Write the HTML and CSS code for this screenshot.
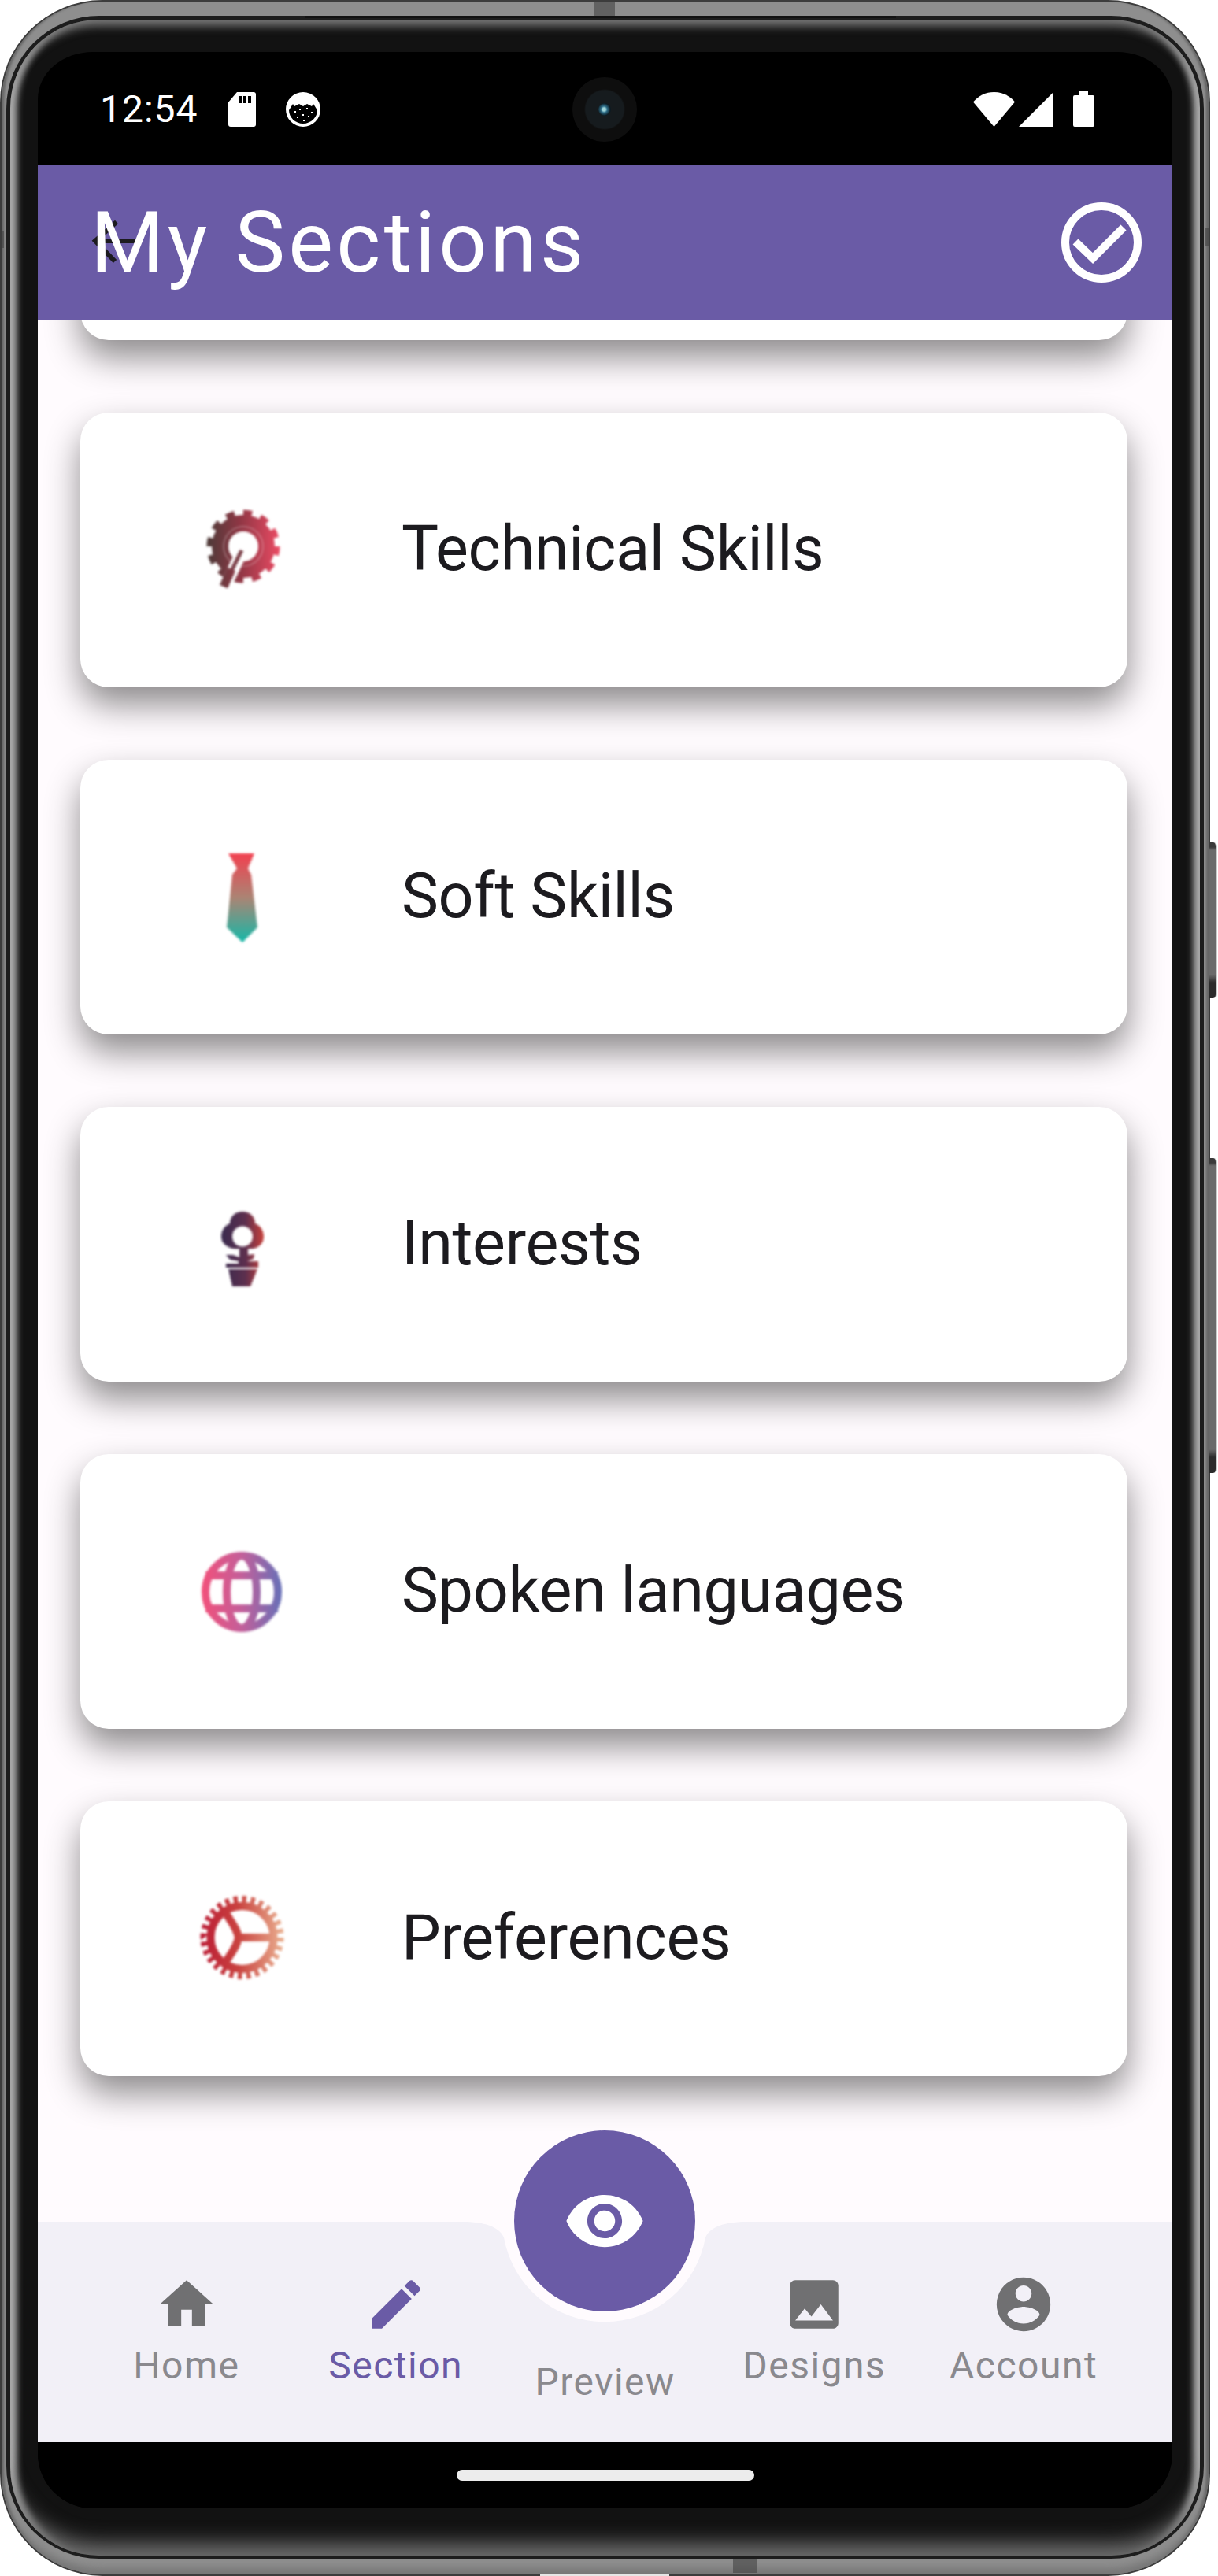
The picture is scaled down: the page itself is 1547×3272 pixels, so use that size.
FILE: index.html
```html
<!DOCTYPE html>
<html lang="en">
<head>
<meta charset="utf-8">
<title>My Sections</title>
<link rel="stylesheet" href="styles.css">
</head>
<body>
<div class="phone">
  <span class="side-btn side-btn-a"></span>
  <span class="side-btn side-btn-b"></span>
  <span class="seam seam-top"></span>
  <span class="seam seam-left"></span>
  <span class="seam seam-right"></span>
  <span class="seam seam-bottom"></span>
  <span class="foot-cut"></span>
  <div class="metal">
    <div class="groove">
      <span class="speaker"></span>
      <div class="bezel">
        <div class="screen">
          <div class="statusbar">
            <span class="clock">12:54</span>
            <svg class="sd" viewBox="0 0 35 44"><path fill="#fff" d="M11 0H32q3 0 3 3V41q0 3-3 3H3q-3 0-3-3V13Z"/><path fill="#000" d="M13 5h4v9h-4zM19 5h4v9h-4zM25 5h4v9h-4z"/></svg>
            <svg class="cat" viewBox="0 0 44 44"><circle cx="22" cy="22" r="22" fill="#fff"/><path fill="#000" d="M4 23 9 15 11 18 17 15 22 18 27 15 33 18 35 15 40 23C40 32 32 40 22 40S4 32 4 23Z"/><path fill="#fff" d="M11 24h2v2h-2zM17 21h2v2h-2zM26 20h2v2h-2zM32 25h2v2h-2zM14 31h2v2h-2zM21 28h2v2h-2zM28 30h2v2h-2zM22 35h2v2h-2z"/></svg>
            <div class="status-right">
              <svg class="wifi" viewBox="0 0 53 44"><path fill="#fff" d="M26.5 44 0 12.500C7 4.500 16 0 26.500 0S46 4.500 53 12.500Z"/></svg>
              <svg class="signal" viewBox="0 0 44 44"><path fill="#fff" d="M44 0V44H0Z"/></svg>
              <svg class="battery" viewBox="0 0 27 45"><path fill="#fff" d="M7 0H19V5H25q2 0 2 2V43q0 2-2 2H2q-2 0-2-2V7q0-2 2-2H7Z"/></svg>
            </div>
            <span class="camera"><span class="lens"></span></span>
          </div>

          <header class="appbar">
            <svg class="back" viewBox="0 0 60 56"><path fill="none" stroke="#1c1b1f" stroke-width="6" d="M33 3 6 27 31 53M6 27H58"/></svg>
            <h1 class="title">My Sections</h1>
            <svg class="done" viewBox="0 0 102 102"><circle cx="51" cy="51" r="46" fill="none" stroke="#fff" stroke-width="10"/><path fill="none" stroke="#fff" stroke-width="10" d="M18 50 40 71 79 32"/></svg>
          </header>

          <main class="content">
            <div class="card-list">
              <div class="card"></div>

              <div class="card">
                <svg class="card-icon" viewBox="0 0 120 120">
                  <defs><linearGradient id="g1" gradientUnits="userSpaceOnUse" x1="16" y1="0" x2="108" y2="0"><stop offset="0" stop-color="#4d3a38"/><stop offset=".45" stop-color="#8f3644"/><stop offset="1" stop-color="#ea4a63"/></linearGradient></defs>
                  <circle cx="62" cy="55" r="42" fill="none" stroke="url(#g1)" stroke-width="9" pathLength="24" stroke-dasharray="1 1"/>
                  <circle cx="62" cy="55" r="29.500" fill="none" stroke="url(#g1)" stroke-width="21"/>
                  <circle cx="62" cy="55" r="25" fill="none" stroke="#fff" stroke-opacity=".3" stroke-width="1.500"/>
                  <path fill="none" stroke="#fff" stroke-width="15" d="M60 62 38 108"/>
                  <path fill="none" stroke="#7a3d46" stroke-width="5" d="M60 60 47 86"/>
                  <path fill="none" stroke="url(#g1)" stroke-width="11" d="M47 84 37 106"/>
                </svg>
                <span class="card-label">Technical Skills</span>
              </div>

              <div class="card">
                <svg class="card-icon" viewBox="0 0 120 120">
                  <defs><linearGradient id="g2" x1="0" y1="0" x2="0" y2="1"><stop offset="0" stop-color="#f2404f"/><stop offset=".5" stop-color="#aa8474"/><stop offset="1" stop-color="#14b8a8"/></linearGradient></defs>
                  <path fill="url(#g2)" d="M43 4H76L68 23 72 31 80 98 61 117 41 98 48 31 54 23Z"/>
                </svg>
                <span class="card-label">Soft Skills</span>
              </div>

              <div class="card">
                <svg class="card-icon" viewBox="0 0 120 120">
                  <defs><linearGradient id="g3" gradientUnits="userSpaceOnUse" x1="36" y1="0" x2="88" y2="0"><stop offset="0" stop-color="#3b2a4e"/><stop offset=".55" stop-color="#5c2f4e"/><stop offset="1" stop-color="#c8403a"/></linearGradient></defs>
                  <path fill="url(#g3)" d="M61 18C70 18 77 24 77 33 84 36 88 42 88 50 88 60 78 67 68 65V73L76 72 75 78 67 81H81V89H40V84H56V81L45 79 40 73H49L57 76V65C46 67 34 60 34 50 34 42 38 36 45 33 45 24 52 18 61 18Z"/>
                  <path fill="url(#g3)" d="M43 91H80L71 113H48Z"/>
                  <circle cx="61" cy="49.500" r="13" fill="#fff"/>
                </svg>
                <span class="card-label">Interests</span>
              </div>

              <div class="card">
                <svg class="card-icon" viewBox="0 0 120 120">
                  <defs><linearGradient id="g4" gradientUnits="userSpaceOnUse" x1="9" y1="0" x2="111" y2="0"><stop offset="0" stop-color="#f2507a"/><stop offset=".5" stop-color="#c35f9a"/><stop offset="1" stop-color="#6670b8"/></linearGradient></defs>
                  <g fill="none" stroke="url(#g4)" stroke-width="10">
                    <circle cx="60" cy="60" r="46"/>
                    <ellipse cx="60" cy="60" rx="19" ry="46"/>
                    <path d="M14 39H106M14 81H106"/>
                  </g>
                </svg>
                <span class="card-label">Spoken languages</span>
              </div>

              <div class="card">
                <svg class="card-icon" viewBox="0 0 120 120">
                  <defs><linearGradient id="g5" gradientUnits="userSpaceOnUse" x1="8" y1="0" x2="113" y2="0"><stop offset="0" stop-color="#bb1c35"/><stop offset=".45" stop-color="#c9423f"/><stop offset="1" stop-color="#eab090"/></linearGradient></defs>
                  <g fill="none" stroke="url(#g5)">
                    <circle cx="60.500" cy="58" r="48" stroke-width="10" pathLength="56" stroke-dasharray="1 1"/>
                    <circle cx="60.500" cy="58" r="40" stroke-width="10"/>
                    <path stroke-width="10" d="M38 24C46 38 54 46 56 58 54 70 46 78 38 92M56 58H100"/>
                  </g>
                </svg>
                <span class="card-label">Preferences</span>
              </div>
            </div>
          </main>

          <nav class="bottom-nav">
            <svg class="nav-shape" viewBox="0 0 1441 280"><path fill="#f2f0f7" d="M0 0H540C566 0 586 6 592 20A130 130 0 0 0 848 20C854 6 874 0 900 0H1441V280H0Z"/></svg>
            <a class="fab"><svg viewBox="0 0 24 24"><path fill="#fff" d="M12 4.500C7 4.500 2.730 7.610 1 12c1.730 4.390 6 7.500 11 7.500s9.270-3.110 11-7.500c-1.730-4.390-6-7.500-11-7.500zM12 17c-2.760 0-5-2.240-5-5s2.240-5 5-5 5 2.240 5 5-2.240 5-5 5zm0-8c-1.660 0-3 1.340-3 3s1.340 3 3 3 3-1.340 3-3-1.340-3-3-3z"/></svg></a>
            <a class="nav-item">
              <svg class="nav-icon" viewBox="0 0 24 24"><path d="M10 20v-6h4v6h5v-8h3L12 3 2 12h3v8z"/></svg>
              <span class="nav-label">Home</span>
            </a>
            <a class="nav-item nav-item-active">
              <svg class="nav-icon" viewBox="0 0 24 24"><path d="M3 17.250V21h3.750L17.810 9.940l-3.750-3.750L3 17.250zM20.710 7.040c.39-.39.39-1.020 0-1.410l-2.340-2.340c-.39-.39-1.020-.39-1.410 0l-1.830 1.830 3.750 3.750 1.830-1.830z"/></svg>
              <span class="nav-label">Section</span>
            </a>
            <a class="nav-item nav-item-center">
              <span class="nav-icon"></span>
              <span class="nav-label">Preview</span>
            </a>
            <a class="nav-item">
              <svg class="nav-icon" viewBox="0 0 24 24"><path d="M21 19V5c0-1.100-.9-2-2-2H5c-1.100 0-2 .9-2 2v14c0 1.100.9 2 2 2h14c1.100 0 2-.9 2-2zM8.500 13.500l2.500 3.010L14.500 12l4.500 6H5l3.500-4.500z"/></svg>
              <span class="nav-label">Designs</span>
            </a>
            <a class="nav-item">
              <svg class="nav-icon" viewBox="0 0 24 24"><path d="M12 2C6.480 2 2 6.480 2 12s4.480 10 10 10 10-4.480 10-10S17.520 2 12 2zm0 3c1.660 0 3 1.340 3 3s-1.340 3-3 3-3-1.340-3-3 1.340-3 3-3zm0 14.200c-2.500 0-4.710-1.280-6-3.220.03-1.990 4-3.080 6-3.080 1.990 0 5.970 1.090 6 3.080-1.290 1.940-3.500 3.220-6 3.220z"/></svg>
              <span class="nav-label">Account</span>
            </a>
          </nav>

          <div class="gesture-bar"><span class="home-pill"></span></div>
        </div>
      </div>
    </div>
  </div>
</div>
</body>
</html>
```

FILE: styles.css
```css
* { box-sizing: border-box; }

html, body {
  margin: 0;
  height: 3272px;
  background: #fff;
  overflow: hidden;
}

body {
  font-family: Roboto, "Liberation Sans", sans-serif;
}

/* device frame */
.phone {
  position: relative;
  width: 1537px;
  height: 3272px;
  padding: 2px;
  border-radius: 130px;
  background: #3c3c3c;
}

.metal {
  height: 100%;
  padding: 18px 6px 20px;
  border-radius: 128px;
  background: #8e8e8e;
  box-shadow: inset 0 -14px 10px -6px #777, inset 5px 0 3px -2px #666, inset -5px 0 3px -2px #666;
}

.groove {
  position: relative;
  height: 100%;
  padding: 5px 5px 4px;
  border-radius: 118px;
  background: #1d1d1d;
}

.bezel {
  height: 100%;
  padding: 41px 35px 60px;
  border-radius: 112px;
  background: #121212;
  box-shadow:
    inset 0 16px 12px -8px #777,
    inset 0 -30px 24px -14px #6c6c6c,
    inset 15px 0 8px -7px #b8b8b8,
    inset -15px 0 8px -7px #b8b8b8;
}

.speaker {
  position: absolute;
  top: 0;
  left: 380px;
  width: 750px;
  height: 3px;
  background: #121212;
}

.side-btn {
  position: absolute;
  left: 1535px;
  width: 11px;
  border-radius: 0 5px 5px 0;
  background: linear-gradient(#3a3a3a 0 6px, #6a6a6a 10px calc(100% - 30px), #2b2b2b calc(100% - 20px));
  border-right: 2px solid #c9c9c9;
}

.side-btn-a { top: 1070px; height: 198px; }
.side-btn-b { top: 1471px; height: 400px; }

.seam {
  position: absolute;
  z-index: 2;
  background: rgba(60, 60, 60, .55);
}

.seam-top { top: 2px; left: 755px; width: 26px; height: 18px; }
.seam-left { top: 293px; left: 0; width: 5px; height: 22px; }
.seam-right { top: 290px; left: 1531px; width: 5px; height: 22px; }
.seam-bottom { top: 3250px; left: 931px; width: 30px; height: 18px; }

.foot-cut {
  position: absolute;
  z-index: 2;
  top: 3269px;
  left: 686px;
  width: 164px;
  height: 3px;
  background: #e6e6e6;
}

.screen {
  display: flex;
  flex-direction: column;
  height: 100%;
  overflow: hidden;
  border-radius: 70px 70px 70px 70px / 60px 60px 70px 70px;
  background: #000;
}

/* status bar */
.statusbar {
  position: relative;
  flex: none;
  display: flex;
  align-items: center;
  height: 144px;
  padding: 1px 99px 0 79px;
}

.clock {
  width: 123px;
  margin-right: 40px;
  color: #fff;
  font-size: 48px;
  letter-spacing: 1px;
  line-height: 1;
}

.sd { width: 35px; height: 44px; margin-right: 38px; }
.cat { width: 44px; height: 44px; }

.status-right {
  display: flex;
  align-items: center;
  margin-left: auto;
}

.wifi { width: 53px; height: 44px; margin-right: 5px; }
.signal { width: 44px; height: 44px; margin-right: 25px; }
.battery { width: 27px; height: 45px; }

.camera {
  position: absolute;
  top: 32px;
  left: 679px;
  display: flex;
  align-items: center;
  justify-content: center;
  width: 82px;
  height: 82px;
  border-radius: 50%;
  background: radial-gradient(circle, #161b1e 0 24px, #0e0e0e 26px);
}

.lens {
  width: 16px;
  height: 16px;
  border-radius: 50%;
  background: radial-gradient(circle at 45% 50%, #9fd4d8 0 2px, #2f6f8a 4px, #0b1a22 8px);
}

/* app bar */
.appbar {
  position: relative;
  flex: none;
  display: flex;
  align-items: center;
  justify-content: space-between;
  height: 196px;
  padding: 0 39px 0 67px;
  background: #6a5ba6;
}

.back {
  position: absolute;
  top: 69px;
  left: 67px;
  width: 60px;
  height: 56px;
}

.title {
  position: relative;
  margin: 0;
  color: #fff;
  font-size: 107px;
  font-weight: 400;
  letter-spacing: 4.300px;
  line-height: 1;
  white-space: nowrap;
}

.done { width: 102px; height: 102px; }

/* scrolling section list */
.content {
  flex: 1;
  min-height: 0;
  overflow: hidden;
  background: #fffbfe;
}

.card-list {
  display: flex;
  flex-direction: column;
  gap: 92px;
  margin-top: -323px;
  padding: 0 57px 0 54px;
}

.card {
  flex: none;
  display: flex;
  align-items: center;
  height: 349px;
  padding-left: 145px;
  border-radius: 36px;
  background: #fff;
  box-shadow: 0 22px 44px rgba(0, 0, 0, .45);
}

.card-icon {
  flex: none;
  width: 120px;
  height: 120px;
  margin-right: 143px;
  filter: blur(1.6px);
}

.card-label {
  margin-bottom: 2px;
  color: #1c1b1f;
  font-size: 79px;
  letter-spacing: -.3px;
  line-height: 1;
  white-space: nowrap;
}

/* bottom navigation */
.bottom-nav {
  position: relative;
  flex: none;
  display: flex;
  height: 280px;
  padding: 64px 56px 0;
  background: #fffbfe;
}

.nav-shape {
  position: absolute;
  top: 0;
  left: 0;
  width: 1441px;
  height: 280px;
}

.fab {
  position: absolute;
  z-index: 1;
  top: -116px;
  left: 605px;
  display: flex;
  align-items: center;
  justify-content: center;
  width: 230px;
  height: 230px;
  border-radius: 50%;
  background: #6a5ba6;
}

.fab svg { width: 106px; height: 106px; }

.nav-item {
  position: relative;
  flex: 1;
  display: flex;
  flex-direction: column;
  align-items: center;
  color: #8a898e;
}

.nav-icon {
  width: 82px;
  height: 82px;
  fill: #707072;
}

.nav-label {
  margin-top: 9px;
  font-size: 48px;
  letter-spacing: 1.500px;
  line-height: 56px;
  white-space: nowrap;
}

.nav-item-active { color: #6a5ba6; }
.nav-item-active .nav-icon { fill: #6a5ba6; }
.nav-item-center .nav-label { margin-top: 30px; }

/* gesture area */
.gesture-bar {
  flex: none;
  display: flex;
  justify-content: center;
  height: 84px;
  padding-top: 35px;
  background: #000;
}

.home-pill {
  width: 378px;
  height: 14px;
  border-radius: 7px;
  background: #ececec;
}
```
